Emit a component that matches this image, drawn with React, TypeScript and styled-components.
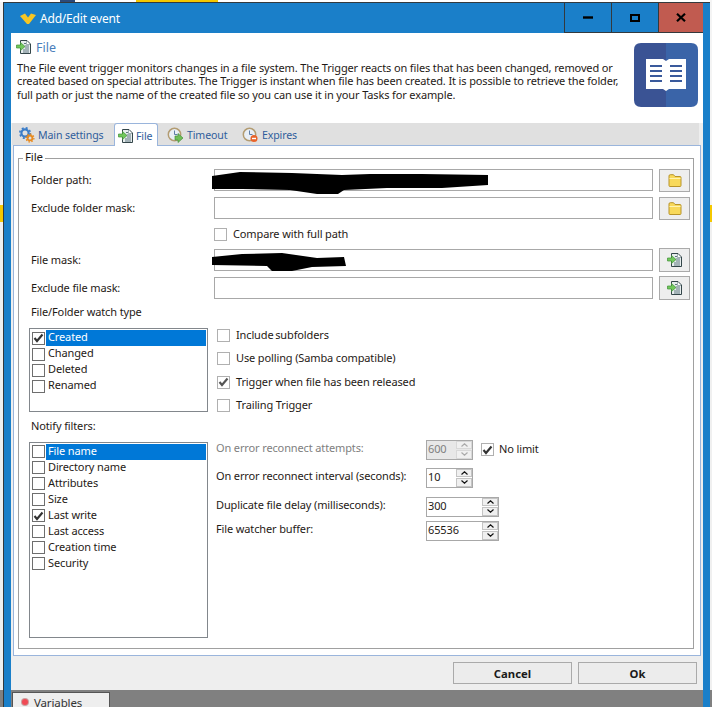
import React from 'react';
import styled, { createGlobalStyle } from 'styled-components';

const GlobalStyle = createGlobalStyle`
  html, body {
    margin: 0;
    padding: 0;
    background: #808080;
  }
  * {
    box-sizing: border-box;
  }
  body {
    font-family: 'Noto Sans', 'Open Sans', sans-serif;
    font-size: 11px;
    letter-spacing: -0.13px;
    color: #1f1a16;
  }
`;

const Desktop = styled.div`
  width: 712px;
  height: 707px;
  overflow: hidden;
  padding: 0 2px 0 3px;
  background: linear-gradient(#f4f4f4 0 205px, #f5c800 205px 222px, #f0f0f0 222px 690px, #808080 690px);
`;

const TopEdge = styled.div`
  display: flex;
  height: 2px;
  margin-left: -3px;
  background: #fff;
`;

const EdgeBit = styled.div<{ $left: number; $width: number; $color: string }>`
  width: ${p => p.$width}px;
  margin-left: ${p => p.$left}px;
  background: ${p => p.$color};
`;

const Window = styled.div`
  width: 707px;
  height: 705px;
  display: flex;
  flex-direction: column;
  padding: 0 7px;
  background: #1a7fc9;
  border-top: 1px solid #33393d;
  border-left: 1px solid #33393d;
`;

const TitleBar = styled.div`
  height: 30px;
  flex: none;
  display: flex;
  align-items: center;
  margin-left: -7px;
  padding-left: 16px;
`;

const TitleText = styled.span`
  margin-left: 4px;
  color: #fff;
  font-size: 12px;
  letter-spacing: -0.2px;
`;

const WindowButtons = styled.div`
  display: flex;
  height: 30px;
  margin-left: auto;
  border-left: 1px solid #33393d;
  border-bottom: 1px solid #33393d;
`;

const WindowButton = styled.div<{ $width: number; $close?: boolean }>`
  width: ${p => p.$width}px;
  display: flex;
  align-items: center;
  justify-content: center;
  background: ${p => (p.$close ? '#c15b50' : 'transparent')};
  & + & {
    border-left: 1px solid #33393d;
  }
`;

const Header = styled.header`
  height: 90px;
  flex: none;
  display: flex;
  padding: 6px 5px 0 5px;
  background: #fff;
`;

const HeaderText = styled.div`
  width: 618px;
  flex: none;
`;

const HeaderTitle = styled.div`
  display: flex;
  align-items: center;
  height: 16px;
  color: #4a7ebb;
  font-size: 12.5px;
  letter-spacing: 0;
  gap: 5px;
`;

const Description = styled.p`
  margin: 6px 0 0 1px;
  line-height: 13.4px;
  white-space: nowrap;
`;

const Logo = styled.svg`
  margin-top: 4px;
  flex: none;
`;

const TabStrip = styled.div`
  height: 22px;
  flex: none;
  display: flex;
  align-items: flex-end;
  padding-left: 1px;
  background: linear-gradient(90deg, #eee 0 1px, #e0e0e0 1px 688px, #eee 688px);
`;

const Tab = styled.div<{ $active?: boolean; $width: number; $pad: number }>`
  width: ${p => p.$width}px;
  height: ${p => (p.$active ? 23 : 22)}px;
  display: flex;
  align-items: center;
  gap: 3px;
  padding: 2px 0 0 ${p => p.$pad}px;
  color: #2f5d9c;
  font-size: 10.6px;
  background: ${p => (p.$active ? '#fff' : 'transparent')};
  border: ${p => (p.$active ? '1px solid #9ab5dc' : 'none')};
  border-bottom: none;
  border-radius: 3px 3px 0 0;
  margin-bottom: ${p => (p.$active ? -1 : 0)}px;
  position: relative;
`;

const PanelArea = styled.div`
  height: 511px;
  flex: none;
  display: flex;
  padding: 0 3px 0 2px;
  background: #eee;
`;

const Panel = styled.div`
  flex: 1;
  display: flex;
  padding: 5px 6px 6px 4px;
  background: #fff;
  border: 1px solid #9ab5dc;
`;

const Group = styled.fieldset`
  flex: 1;
  min-width: 0;
  margin: 0;
  padding: 4px 3px 0 12px;
  border: 1px solid #a0a0a0;
`;

const Legend = styled.legend`
  margin-left: -8px;
  padding: 0 2px 2px;
  height: 14px;
  line-height: 11px;
  font-size: 11.5px;
`;

const FormGrid = styled.div`
  display: grid;
  grid-template-columns: 177px 439px 31px;
  grid-template-rows: 22px 22px 18px 22px 22px;
  gap: 6px;
  align-items: center;
`;

const Label = styled.label<{ $disabled?: boolean }>`
  padding-bottom: 2px;
  color: ${p => (p.$disabled ? '#808080' : '#1f1a16')};
  white-space: nowrap;
`;

const TextBox = styled.div`
  position: relative;
  height: 22px;
  border: 1px solid #a8a8a8;
  background: #fff;
`;

const Scribble = styled.svg<{ $top: number }>`
  position: absolute;
  left: -3px;
  top: ${p => p.$top}px;
`;

const BrowseButton = styled.button<{ $height: number }>`
  width: 31px;
  height: ${p => p.$height}px;
  display: flex;
  align-items: center;
  justify-content: center;
  padding: 0;
  background: #eee;
  border: 1px solid #aaa;
`;

const CompareCheck = styled.div`
  grid-column: 2;
  display: flex;
  align-items: center;
  gap: 6px;
`;

const SectionLabel = styled.div<{ $top: number; $bottom: number }>`
  height: 16px;
  line-height: 16px;
  margin: ${p => p.$top}px 0 ${p => p.$bottom}px;
`;

const ListRow = styled.div`
  display: flex;
  gap: 8px;
  margin-left: -2px;
`;

const CheckList = styled.div<{ $height: number }>`
  width: 179px;
  height: ${p => p.$height}px;
  flex: none;
  padding: 1px 1px 0 2px;
  border: 1px solid #82878c;
  background: #fff;
`;

const ListItem = styled.div`
  display: flex;
  align-items: center;
  height: 16px;
`;

const ListText = styled.span<{ $selected?: boolean }>`
  flex: 1;
  height: 16px;
  line-height: 13px;
  margin-left: 1px;
  padding-left: 2px;
  color: ${p => (p.$selected ? '#fff' : '#1f1a16')};
  background: ${p => (p.$selected ? '#0078d7' : 'transparent')};
`;

const Box = styled.span<{ $strong?: boolean }>`
  width: 13px;
  height: 13px;
  flex: none;
  display: flex;
  align-items: center;
  justify-content: center;
  background: #fff;
  border: 1px solid ${p => (p.$strong ? '#6e6e6e' : '#b0b0b0')};
`;

const OptionColumn = styled.div`
  display: flex;
  flex-direction: column;
  gap: 9.5px;
  margin-left: 1px;
`;

const OptionRow = styled.div`
  display: flex;
  align-items: center;
  gap: 6px;
  height: 14px;
`;

const OptionText = styled.span<{ $tight?: boolean }>`
  padding-bottom: 2px;
  word-spacing: ${p => (p.$tight ? -1 : 0)}px;
  white-space: nowrap;
`;

const SpinColumn = styled.div`
  margin-top: -2px;
`;

const SpinRow = styled.div<{ $top: number }>`
  display: flex;
  align-items: center;
  height: 20px;
  margin-top: ${p => p.$top}px;
`;

const SpinLabel = styled(Label)`
  width: 210px;
  flex: none;
  padding-bottom: 4px;
`;

const Spin = styled.div<{ $width: number; $disabled?: boolean }>`
  width: ${p => p.$width}px;
  height: 20px;
  display: flex;
  justify-content: space-between;
  padding-left: 1px;
  border: 1px solid #a8a8a8;
  background: ${p => (p.$disabled ? '#e8e8e8' : '#fff')};
  color: ${p => (p.$disabled ? '#808080' : '#1f1a16')};
  line-height: 15px;
`;

const SpinArrows = styled.div`
  width: 16px;
  display: flex;
  flex-direction: column;
  gap: 1px;
`;

const SpinArrow = styled.div<{ $disabled?: boolean }>`
  flex: 1;
  display: flex;
  align-items: center;
  justify-content: center;
  background: #f0f0f0;
  border: 1px solid ${p => (p.$disabled ? '#d8d8d8' : '#c4c4c4')};
`;

const NoLimit = styled.div`
  display: flex;
  align-items: center;
  gap: 5px;
  margin-left: 8px;
`;

const Footer = styled.footer`
  height: 34px;
  flex: none;
  display: flex;
  justify-content: flex-end;
  gap: 6px;
  padding: 6px 6px 0 0;
  background: #eee;
`;

const FooterButton = styled.button`
  width: 119px;
  height: 22px;
  padding: 0;
  background: #ececec;
  border: 1px solid #aaa;
  font-family: inherit;
  font-size: 11.3px;
  font-weight: 700;
  color: #1a1a1a;
`;

const TaskStrip = styled.div`
  height: 17px;
  flex: none;
  overflow: hidden;
  padding: 2px 0 0 1px;
  background: #808080;
`;

const TaskTab = styled.div`
  width: 98px;
  height: 20px;
  display: flex;
  align-items: center;
  gap: 6px;
  padding-left: 9px;
  background: #eee;
  border: 1px solid #555;
  font-size: 11.5px;
  color: #333;
`;

const RedDot = styled.span`
  width: 6px;
  height: 6px;
  border-radius: 50%;
  background: #f04a55;
  box-shadow: 0 0 0 1px #c9a0a0;
`;

function Tick({ color = '#333' }: { color?: string }) {
  return (
    <svg width="11" height="10" viewBox="0 0 11 10">
      <path d="M1.5 5 L4 8 L9.5 1.5" fill="none" stroke={color} strokeWidth="2.1" />
    </svg>
  );
}

function Chevron({ up, color = '#111' }: { up?: boolean; color?: string }) {
  return (
    <svg width="7" height="4" viewBox="0 0 7 4">
      <path d={up ? 'M0.5 3.5 L3.5 0.8 L6.5 3.5' : 'M0.5 0.5 L3.5 3.2 L6.5 0.5'} fill="none" stroke={color} strokeWidth="1.2" />
    </svg>
  );
}

function AppMark() {
  return (
    <svg width="16" height="11" viewBox="0 0 16 11">
      <path d="M0 3 L5 0.5 L8 4.5 L11 0.5 L16 2 L9 11 L7 11 Z" fill="#f6c623" />
    </svg>
  );
}

function FileArrowIcon() {
  return (
    <svg width="15" height="14" viewBox="0 0 15 14">
      <path d="M4.5 0.5 H11 L14.5 4 V13.5 H4.5 Z" fill="#e8eeee" stroke="#34464a" />
      <path d="M10.5 1 V4.5 H14" fill="#fff" stroke="#7d9097" strokeWidth="0.7" />
      <path d="M8 3.5 H10 M9 6 H13 M9 8 H13 M7 10 H13 M7 12 H13" stroke="#5f7680" />
      <path d="M0.5 5 H4.5 V2.5 L9 6.5 L4.5 10.5 V8 H0.5 Z" fill="#72c85c" stroke="#3f8f38" strokeWidth="0.7" />
    </svg>
  );
}

function FolderIcon() {
  return (
    <svg width="14" height="13" viewBox="0 0 14 13">
      <path d="M1 2 Q1 0.7 2.3 0.7 H5.5 L7 2.5 H12 Q13 2.5 13 3.5 V11.5 Q13 12.5 12 12.5 H2 Q1 12.5 1 11.5 Z" fill="#f8d95a" stroke="#b8942a" />
      <path d="M1.5 4.5 H12.5" stroke="#fff3b0" />
    </svg>
  );
}

function ClockIcon({ badge }: { badge: 'go' | 'stop' }) {
  return (
    <svg width="17" height="16" viewBox="0 0 17 16">
      <circle cx="7.5" cy="7.5" r="6.2" fill="#e9eff6" stroke="#b39c72" strokeWidth="1.5" />
      <path d="M7.5 3.5 V7.5 H10.5" fill="none" stroke="#5f7ea6" />
      {badge === 'go' ? (
        <path d="M8 9 H11 V6.5 L16 11 L11 15.5 V13 H8 Z" fill="#6fbe58" stroke="#46903a" strokeWidth="0.7" />
      ) : (
        <>
          <circle cx="12" cy="11.5" r="3.5" fill="#e8622a" />
          <path d="M10 11.5 H14" stroke="#fff" strokeWidth="1.4" />
        </>
      )}
    </svg>
  );
}

function GearIcon() {
  return (
    <svg width="16" height="16" viewBox="0 0 16 16">
      <circle cx="6" cy="6" r="3.6" fill="none" stroke="#3a7cc8" strokeWidth="2.2" />
      <circle cx="6" cy="6" r="5.2" fill="none" stroke="#3a7cc8" strokeWidth="1.6" strokeDasharray="2 2.1" />
      <circle cx="11" cy="11" r="2.4" fill="none" stroke="#e88a1e" strokeWidth="1.8" />
      <circle cx="11" cy="11" r="3.9" fill="none" stroke="#e88a1e" strokeWidth="1.3" strokeDasharray="1.6 1.4" />
    </svg>
  );
}

function BookLogo() {
  return (
    <Logo width="64" height="64" viewBox="0 0 64 64">
      <path d="M32 0 H7 Q0 0 0 7 V57 Q0 64 7 64 H32 Z" fill="#3a5394" />
      <path d="M32 0 H57 Q64 0 64 7 V57 Q64 64 57 64 H32 Z" fill="#3a64a8" />
      <path d="M12 16 H29 L32 18 L35 16 H52 V46 H35 L32 48 L29 46 H12 Z" fill="#fff" />
      {[22, 27, 32, 37].map(y => (
        <React.Fragment key={y}>
          <rect x="16" y={y} width="12" height="2" fill="#3a5a9c" />
          <rect x="36" y={y} width="12" height="2" fill="#3a5a9c" />
        </React.Fragment>
      ))}
    </Logo>
  );
}

const watchTypes = [
  { name: 'Created', checked: true },
  { name: 'Changed' },
  { name: 'Deleted' },
  { name: 'Renamed' },
];

const notifyFilters = [
  { name: 'File name' },
  { name: 'Directory name' },
  { name: 'Attributes' },
  { name: 'Size' },
  { name: 'Last write', checked: true },
  { name: 'Last access' },
  { name: 'Creation time' },
  { name: 'Security' },
];

type Item = { name: string; checked?: boolean };

function Items({ items }: { items: Item[] }) {
  return (
    <>
      {items.map((item, i) => (
        <ListItem key={item.name}>
          <Box $strong>{item.checked && <Tick />}</Box>
          <ListText $selected={i === 0}>{item.name}</ListText>
        </ListItem>
      ))}
    </>
  );
}

function SpinBox({ value, width, disabled }: { value: string; width: number; disabled?: boolean }) {
  const color = disabled ? '#aaa' : '#111';
  return (
    <Spin $width={width} $disabled={disabled}>
      {value}
      <SpinArrows>
        <SpinArrow $disabled={disabled}>
          <Chevron up color={color} />
        </SpinArrow>
        <SpinArrow $disabled={disabled}>
          <Chevron color={color} />
        </SpinArrow>
      </SpinArrows>
    </Spin>
  );
}

export default function App() {
  return (
    <Desktop>
      <GlobalStyle />
      <TopEdge>
        <EdgeBit $left={60} $width={15} $color="#2b4a7a" />
        <EdgeBit $left={61} $width={82} $color="#f5c800" />
      </TopEdge>
      <Window>
        <TitleBar>
          <AppMark />
          <TitleText>Add/Edit event</TitleText>
          <WindowButtons>
            <WindowButton $width={46}>
              <svg width="10" height="3" viewBox="0 0 10 3">
                <rect width="10" height="2.4" y="0.3" fill="#000" />
              </svg>
            </WindowButton>
            <WindowButton $width={47}>
              <svg width="10" height="8" viewBox="0 0 10 8">
                <rect x="1" y="1" width="8" height="6" fill="none" stroke="#000" strokeWidth="2" />
              </svg>
            </WindowButton>
            <WindowButton $width={45} $close>
              <svg width="10" height="9" viewBox="0 0 10 9">
                <path d="M1 0.8 L9 8.2 M9 0.8 L1 8.2" stroke="#000" strokeWidth="2.2" />
              </svg>
            </WindowButton>
          </WindowButtons>
        </TitleBar>

        <Header>
          <HeaderText>
            <HeaderTitle>
              <FileArrowIcon />
              File
            </HeaderTitle>
            <Description>
              The File event trigger monitors changes in a file system. The Trigger reacts on files that has been changed, removed or
              <br />
              created based on special attributes. The Trigger is instant when file has been created. It is possible to retrieve the folder,
              <br />
              full path or just the name of the created file so you can use it in your Tasks for example.
            </Description>
          </HeaderText>
          <BookLogo />
        </Header>

        <TabStrip>
          <Tab $width={102} $pad={7}>
            <GearIcon />
            Main settings
          </Tab>
          <Tab $width={44} $pad={3} $active>
            <FileArrowIcon />
            File
          </Tab>
          <Tab $width={75} $pad={9}>
            <ClockIcon badge="go" />
            Timeout
          </Tab>
          <Tab $width={70} $pad={9}>
            <ClockIcon badge="stop" />
            Expires
          </Tab>
        </TabStrip>

        <PanelArea>
          <Panel>
            <Group>
              <Legend>File</Legend>
              <FormGrid>
                <Label>Folder path:</Label>
                <TextBox>
                  <Scribble $top={2} width="277" height="23" viewBox="0 0 277 23">
                    <path
                      d="M0 4 L28 0 L80 1 L130 3 L158 2 L210 2 L276 3 L276 13 L230 16 L175 16 L132 18 L126 22 L105 22 L78 18 L30 17 L0 17 Z"
                      fill="#000"
                    />
                  </Scribble>
                </TextBox>
                <BrowseButton $height={23}>
                  <FolderIcon />
                </BrowseButton>

                <Label>Exclude folder mask:</Label>
                <TextBox />
                <BrowseButton $height={23}>
                  <FolderIcon />
                </BrowseButton>

                <CompareCheck>
                  <Box />
                  <OptionText>Compare with full path</OptionText>
                </CompareCheck>
                <span />

                <Label>File mask:</Label>
                <TextBox>
                  <Scribble $top={3} width="135" height="20" viewBox="0 0 135 20">
                    <path d="M0 4 L30 1 L70 0 L105 5 L132 4 L134 13 L100 14 L80 18 L60 18 L55 13 L0 12 Z" fill="#000" />
                  </Scribble>
                </TextBox>
                <BrowseButton $height={24}>
                  <FileArrowIcon />
                </BrowseButton>

                <Label>Exclude file mask:</Label>
                <TextBox />
                <BrowseButton $height={24}>
                  <FileArrowIcon />
                </BrowseButton>
              </FormGrid>

              <SectionLabel $top={5} $bottom={8}>
                File/Folder watch type
              </SectionLabel>
              <ListRow>
                <CheckList $height={84}>
                  <Items items={watchTypes} />
                </CheckList>
                <OptionColumn>
                  <OptionRow>
                    <Box />
                    <OptionText $tight>Include subfolders</OptionText>
                  </OptionRow>
                  <OptionRow>
                    <Box />
                    <OptionText>Use polling (Samba compatible)</OptionText>
                  </OptionRow>
                  <OptionRow>
                    <Box>
                      <Tick color="#555" />
                    </Box>
                    <OptionText>Trigger when file has been released</OptionText>
                  </OptionRow>
                  <OptionRow>
                    <Box />
                    <OptionText>Trailing Trigger</OptionText>
                  </OptionRow>
                </OptionColumn>
              </ListRow>

              <SectionLabel $top={5} $bottom={8}>
                Notify filters:
              </SectionLabel>
              <ListRow>
                <CheckList $height={196}>
                  <Items items={notifyFilters} />
                </CheckList>
                <SpinColumn>
                  <SpinRow $top={0}>
                    <SpinLabel $disabled>On error reconnect attempts:</SpinLabel>
                    <SpinBox value="600" width={47} disabled />
                    <NoLimit>
                      <Box>
                        <Tick />
                      </Box>
                      <OptionText>No limit</OptionText>
                    </NoLimit>
                  </SpinRow>
                  <SpinRow $top={8}>
                    <SpinLabel>On error reconnect interval (seconds):</SpinLabel>
                    <SpinBox value="10" width={47} />
                  </SpinRow>
                  <SpinRow $top={9}>
                    <SpinLabel>Duplicate file delay (milliseconds):</SpinLabel>
                    <SpinBox value="300" width={73} />
                  </SpinRow>
                  <SpinRow $top={4}>
                    <SpinLabel>File watcher buffer:</SpinLabel>
                    <SpinBox value="65536" width={73} />
                  </SpinRow>
                </SpinColumn>
              </ListRow>
            </Group>
          </Panel>
        </PanelArea>

        <Footer>
          <FooterButton>Cancel</FooterButton>
          <FooterButton>Ok</FooterButton>
        </Footer>

        <TaskStrip>
          <TaskTab>
            <RedDot />
            Variables
          </TaskTab>
        </TaskStrip>
      </Window>
    </Desktop>
  );
}
